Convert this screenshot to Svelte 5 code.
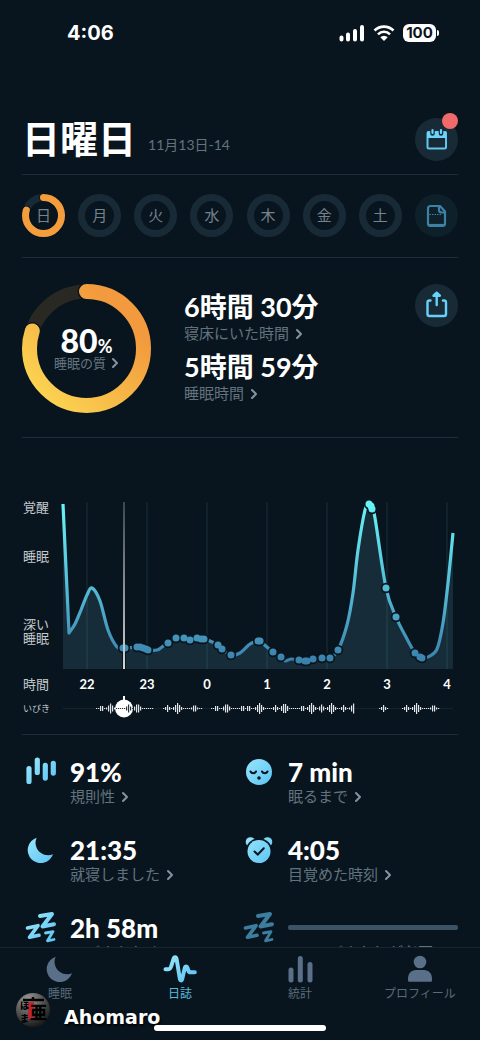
<script>
  const days = ['日', '月', '火', '水', '木', '金', '土'];
  const quality = 80;

  const stats = [
    { icon: 'bars', value: '91%', label: '規則性' },
    { icon: 'face', value: '7 min', label: '眠るまで' },
    { icon: 'moon', value: '21:35', label: '就寝しました' },
    { icon: 'clock', value: '4:05', label: '目覚めた時刻' },
    { icon: 'zzz', value: '2h 58m', label: 'いびきをかく' },
    { icon: 'zzz', value: null, label: 'いびきなしが必要' },
  ];

  const tabs = [
    { icon: 'moon', label: '睡眠' },
    { icon: 'pulse', label: '日誌', active: true },
    { icon: 'chart', label: '統計' },
    { icon: 'person', label: 'プロフィール' },
  ];

  const hours = ['22', '23', '0', '1', '2', '3', '4'].map((label, i) => ({ label, x: 65 + i * 60 }));

  // third value marks a detected snore
  const samples = [
    [47, 135], [53, 126], [59, 112], [65, 97], [70, 90], [78, 103], [86, 132], [95, 149],
    [101, 150, 1], [103, 150, 1], [115, 149, 1], [118, 149, 1], [121, 150, 1], [124, 151, 1],
    [126, 152, 1], [135, 152], [140, 149], [146, 145, 1], [154, 140, 1], [162, 140, 1],
    [168, 142, 1], [175, 140, 1], [179, 141, 1], [182, 141, 1], [188, 143], [196, 147, 1],
    [200, 151, 1], [209, 157, 1], [218, 155], [228, 146], [236, 143, 1], [238, 143, 1],
    [245, 149], [251, 154, 1], [259, 159, 1], [263, 163], [269, 161], [277, 162, 1],
    [283, 163, 1], [285, 163, 1], [291, 161, 1], [300, 160, 1], [308, 160, 1], [316, 152, 1],
    [325, 127], [331, 95], [336, 52], [343, 12], [347, 6, 1], [349, 8, 1], [350, 11, 1],
    [353, 20], [364, 90, 1], [374, 119, 1], [385, 141], [393, 155, 1], [398, 159, 1],
    [400, 160, 1], [406, 159], [415, 151], [421, 125], [426, 85], [431, 35],
  ];
  const snores = samples.filter((s) => s[2]);

  function smooth(pts) {
    let d = '';
    for (let i = 0; i < pts.length - 1; i++) {
      const a = pts[Math.max(i - 1, 0)];
      const b = pts[i];
      const c = pts[i + 1];
      const e = pts[Math.min(i + 2, pts.length - 1)];
      d += ` C${b[0] + (c[0] - a[0]) / 6} ${b[1] + (c[1] - a[1]) / 6}`
        + ` ${c[0] - (e[0] - b[0]) / 6} ${c[1] - (e[1] - b[1]) / 6} ${c[0]} ${c[1]}`;
    }
    return d;
  }

  const curve = 'M41 6 L47 135' + smooth(samples);
  const area = curve + ' V171 H41 Z';

  const ranges = [[74, 132], [141, 180], [189, 332], [357, 367], [380, 417]];
  const peaks = [
    [79, 6], [88, 9], [106, 7], [115, 9], [145, 6], [155, 10], [172, 7], [194, 6], [204, 9],
    [220, 6], [226, 6], [237, 10], [253, 6], [262, 10], [280, 6], [289, 10], [299, 7],
    [309, 10], [321, 6], [331, 9], [361, 6], [384, 6], [394, 10], [411, 7],
  ];
  const bars = ranges.flatMap(([from, to]) => {
    const out = [];
    for (let x = from; x < to; x += 2) {
      out.push({ x, h: Math.max(1, ...peaks.map(([p, h]) => h + 1 - 2 * Math.abs(x - p))) });
    }
    return out;
  });
</script>

{#snippet chevron()}
  <svg class="chevron" viewBox="0 0 8 12" aria-hidden="true"><path d="M2 2l4 4-4 4" /></svg>
{/snippet}

{#snippet icon(name)}
  <svg class="icon" viewBox="0 0 38 36" aria-hidden="true">
    {#if name === 'bars'}
      <path class="line" stroke-width="5.2" d="M7 14.6v12.8M15.3 6v12.4M23.3 11.3v12.8M31.3 9.3v9.8" />
    {:else if name === 'moon'}
      <path class="fill" d="M14.7 5.7A13 13 0 1 0 31 22.3C24 25 17 21.5 14.5 15.5C13 12 13.3 8.5 14.7 5.7Z" />
    {:else if name === 'face'}
      <circle class="fill" cx="19" cy="18" r="13" />
      <path class="cut" d="M10.5 17.5c1 2.3 4.5 2.3 5.5 0M22 17.5c1 2.3 4.5 2.3 5.5 0" />
      <circle cx="19" cy="24" r="1.8" fill="#09151e" />
    {:else if name === 'clock'}
      <circle class="fill" cx="10.5" cy="10" r="4.8" />
      <circle class="fill" cx="27.5" cy="10" r="4.8" />
      <circle cx="19" cy="19.5" r="13.3" fill="#09151e" />
      <circle class="fill" cx="19" cy="19.5" r="11.5" />
      <path class="cut" d="M14.5 19.5l3.3 3 6-6.2" />
    {:else if name === 'zzz'}
      <path class="line" stroke-width="4" d="M18 6l12-2-9.5 12.5 11.5-2.3" />
      <path class="line" stroke-width="3.6" d="M5.5 18l10.5-2.3-8.5 11.6 9.5-2" />
      <path class="line" stroke-width="2.8" d="M23.5 23l7.5-1.4-5.5 9.2 6.5-1.3" />
    {:else if name === 'pulse'}
      <path class="line" stroke-width="4" d="M4.5 18.3H7C9 18.3 9.5 17.5 10.3 15L12.5 8C13.3 5.5 15 5.5 15.6 8L18.8 27.5C19.2 30 20.8 30 21.3 27.5L23.8 17C24.3 15 26 15 26.6 17L27.3 19.5C27.8 21 28.5 21.3 30 21.3H33.8" />
    {:else if name === 'chart'}
      <path class="line" stroke-width="5" d="M10 19v10M19.3 7.5V29M29 13.5V29" />
    {:else}
      <circle class="fill" cx="19" cy="11" r="6.3" />
      <path class="fill" d="M7 27.5c0-5 3.5-8.5 8-8.5h8c4.5 0 8 3.5 8 8.5v2q0 1.3-1.3 1.3H8.3Q7 30.8 7 29.5Z" />
    {/if}
  </svg>
{/snippet}

<svg class="defs" aria-hidden="true">
  <linearGradient id="ice" x1="0" y1="0" x2="38" y2="36" gradientUnits="userSpaceOnUse">
    <stop offset="0" stop-color="#a5ecff" />
    <stop offset="1" stop-color="#4fbdf0" />
  </linearGradient>
</svg>

<main>
  <div class="status">
    <time>4:06</time>
    <div class="signals">
      <svg width="26" height="18" viewBox="0 0 26 18" aria-label="電波">
        <path d="M2.5 13.5v2M9 10.5v5M16 7v8.5M23 3v12.5" stroke="#fff" stroke-width="4" stroke-linecap="round" />
      </svg>
      <svg width="22" height="18" viewBox="0 0 22 18" aria-label="Wi-Fi">
        <path d="M1.5 6.5a13.5 13.5 0 0 1 19 0M5 10.3a8.5 8.5 0 0 1 12 0" fill="none" stroke="#fff" stroke-width="2.6" />
        <path d="M11 17l-3.7-3.8a5.3 5.3 0 0 1 7.4 0Z" fill="#fff" />
      </svg>
      <span class="battery">100</span>
    </div>
  </div>

  <header>
    <h1>日曜日</h1>
    <span class="date">11月13日-14</span>
    <button class="round" aria-label="カレンダー">
      <svg viewBox="0 0 43 43">
        <rect x="12.5" y="14" width="18.5" height="16.5" rx="1.5" fill="none" stroke="#5fc8ee" stroke-width="2" />
        <path d="M12 13.5h19.5v6.5H12Z" fill="#6cd3fa" />
        <path d="M17.5 11.5v4M26 11.5v4" stroke="#192a37" stroke-width="4.6" stroke-linecap="round" />
        <path d="M17.5 12v3M26 12v3" stroke="#6cd3fa" stroke-width="2.2" stroke-linecap="round" />
      </svg>
      <span class="badge"></span>
    </button>
  </header>

  <nav class="week" aria-label="曜日">
    {#each days as day, i (day)}
      <button class="day">
        <svg viewBox="0 0 43 43" aria-hidden="true">
          <circle class="track" cx="21.5" cy="21.5" r="18" />
          {#if i === 0}
            <circle class="gap" cx="21.5" cy="21.5" r="18" pathLength="100" stroke-dasharray="{quality} 100" />
            <circle class="done" cx="21.5" cy="21.5" r="18" pathLength="100" stroke-dasharray="{quality} 100" />
          {/if}
        </svg>
        <span>{day}</span>
      </button>
    {/each}
    <button class="round dim" aria-label="メモ">
      <svg viewBox="0 0 43 43" fill="none" stroke="#3d81a4" stroke-width="2.2" stroke-linejoin="round">
        <path d="M15.5 12h9.5l5 5.5v12q0 2.5-2.5 2.5h-12q-2.5 0-2.5-2.5v-15q0-2.5 2.5-2.5Z" />
        <path d="M24 12.5V16q0 2.5 2.5 2.5H29.5" />
        <path d="M14.5 20.5H26" stroke-width="1" stroke-dasharray="1.5 1" />
        <path d="M14 31H29" />
      </svg>
    </button>
  </nav>

  <section class="summary">
    <a class="quality" href="#quality">
      <svg class="ring" viewBox="0 0 129 129" aria-hidden="true">
        <linearGradient id="gold" x1="0.1" y1="0.1" x2="0.8" y2="0.8">
          <stop offset="0" stop-color="#fbd351" />
          <stop offset="1" stop-color="#f29a3d" />
        </linearGradient>
        <circle class="track" cx="64.5" cy="64.5" r="57" />
        <circle class="gap" cx="64.5" cy="64.5" r="57" pathLength="100" stroke-dasharray="{quality} 100" />
        <circle class="done" cx="64.5" cy="64.5" r="57" pathLength="100" stroke-dasharray="{quality} 100" />
      </svg>
      <span class="percent">{quality}<small>%</small></span>
      <span class="caption">睡眠の質{@render chevron()}</span>
    </a>
    <div class="times">
      <a href="#bed">
        <strong>6時間 30分</strong>
        <span class="label">寝床にいた時間{@render chevron()}</span>
      </a>
      <a href="#asleep">
        <strong>5時間 59分</strong>
        <span class="label">睡眠時間{@render chevron()}</span>
      </a>
    </div>
    <button class="round" aria-label="共有">
      <svg viewBox="0 0 43 43" fill="none" stroke="#66d2fb" stroke-width="2.4" stroke-linecap="round" stroke-linejoin="round">
        <path d="M15.5 16.5h-1q-2 0-2 2v11.5q0 2 2 2h14.5q2 0 2-2v-11.5q0-2-2-2h-1" />
        <path d="M21.7 21V10.5" />
        <path d="M18.5 11.7l3.2-3 3.2 3Z" fill="#66d2fb" />
      </svg>
    </button>
  </section>

  <section class="graph">
    <svg viewBox="0 0 436 224" role="img" aria-label="睡眠グラフ">
      <linearGradient id="depth" x1="0" y1="4" x2="0" y2="166" gradientUnits="userSpaceOnUse">
        <stop offset="0" stop-color="#68f4f7" />
        <stop offset="0.55" stop-color="#54b8d5" />
        <stop offset="1" stop-color="#397faa" />
      </linearGradient>
      <linearGradient id="cursor" x1="0" y1="4" x2="0" y2="171" gradientUnits="userSpaceOnUse">
        <stop offset="0" stop-color="#3d464e" />
        <stop offset="1" stop-color="#d4d6d8" />
      </linearGradient>

      <path d={area} fill="#162d39" />
      {#each hours as hour (hour.label)}
        <path class="hour-line" d="M{hour.x} 4V171" />
        <text class="hour" x={hour.x} y="191">{hour.label}</text>
      {/each}
      <path d={curve} fill="none" stroke="url(#depth)" stroke-width="3.2" stroke-linejoin="round" />
      {#each snores as [x, y]}
        <circle cx={x} cy={y} r="5.2" fill="#09151e" />
      {/each}
      <path d="M102 4V171" stroke="#09151e" stroke-width="4" />
      {#each snores as [x, y]}
        <circle cx={x} cy={y} r="3.5" fill="url(#depth)" />
      {/each}

      <g class="level">
        <text x="1" y="14">覚醒</text>
        <text x="1" y="63">睡眠</text>
        <text x="1" y="131">深い</text>
        <text x="1" y="145">睡眠</text>
        <text x="1" y="191">時間</text>
        <text class="tiny" x="1" y="214">いびき</text>
      </g>

      <path d="M41 210.5H431" stroke="#15232d" />
      <path d="M101 4h2V171h-2Z" fill="url(#cursor)" />
      <path d="M102 198v6" stroke="#fff" stroke-width="2" />
      <circle cx="102" cy="210.5" r="9" fill="#fff" />
      {#each bars as bar}
        <rect
          x={bar.x}
          y={210.5 - bar.h / 2}
          width="1.2"
          height={bar.h}
          fill={Math.abs(bar.x - 102) < 9 ? '#27323b' : '#e4e7e9'}
        />
      {/each}
    </svg>
  </section>

  <section class="stats">
    {#each stats as stat}
      <a class="stat" class:locked={!stat.value} href="#stats">
        {@render icon(stat.icon)}
        <div>
          {#if stat.value}
            <strong>{stat.value}</strong>
            <span class="label">{stat.label}{@render chevron()}</span>
          {:else}
            <span class="bar"></span>
            <span class="label">{stat.label}</span>
          {/if}
        </div>
      </a>
    {/each}
  </section>
</main>

<footer>
  <nav class="tabs">
    {#each tabs as tab (tab.label)}
      <button class:active={tab.active} aria-current={tab.active ? 'page' : undefined}>
        {@render icon(tab.icon)}
        <span>{tab.label}</span>
      </button>
    {/each}
  </nav>
  <div class="author">
    <svg viewBox="0 0 36 36" aria-hidden="true">
      <radialGradient id="coin" cx="0.35" cy="0.2" r="0.8">
        <stop offset="0" stop-color="#9a9a9a" />
        <stop offset="0.55" stop-color="#555555" />
        <stop offset="1" stop-color="#1c1c1c" />
      </radialGradient>
      <circle cx="18" cy="18" r="17" fill="url(#coin)" />
      <path d="M13 10h6v17h-6Z" fill="#c0262d" />
      <path d="M8 8h21M18 5v4" stroke="#000" stroke-width="2.5" />
      <text x="5" y="17" font-size="9">ほ</text>
      <text x="5" y="30" font-size="9">ま</text>
      <text x="15" y="27" font-size="17">亜</text>
    </svg>
    <span>Ahomaro</span>
  </div>
  <div class="home"></div>
</footer>

<style>
  :global(body) {
    background: #09151e;
  }
  main,
  footer {
    font-family: Lato, "Noto Sans CJK JP", sans-serif;
    color: #ffffff;
  }
  main {
    padding: 0 22px 96px;
  }
  button {
    margin: 0;
    padding: 0;
    border: 0;
    background: none;
    color: inherit;
    font: inherit;
    cursor: pointer;
  }
  a {
    color: inherit;
    text-decoration: none;
  }
  svg {
    display: block;
  }
  .defs {
    position: absolute;
    width: 0;
    height: 0;
  }

  .status {
    display: flex;
    justify-content: space-between;
    align-items: center;
    height: 66px;
    padding: 0 22px 0 45px;
    font-family: Inter, sans-serif;
    font-weight: 700;
  }
  .status time {
    font-size: 20px;
  }
  .signals {
    display: flex;
    align-items: center;
    gap: 8px;
  }
  .battery {
    position: relative;
    width: 33px;
    border-radius: 6px;
    background: #ffffff;
    color: #09151e;
    font-size: 15px;
    line-height: 18px;
    text-align: center;
  }
  .battery::after {
    content: '';
    position: absolute;
    top: 6px;
    right: -3px;
    width: 2px;
    height: 6px;
    border-radius: 0 2px 2px 0;
    background: #ffffff;
  }

  header {
    display: flex;
    align-items: center;
    margin-top: 52px;
    padding-bottom: 13px;
    border-bottom: 1px solid #1d2f3c;
  }
  h1 {
    margin: 0 0 3px;
    font-size: 38px;
    line-height: 40px;
    font-weight: 700;
  }
  .date {
    margin: 10px auto 0 12px;
    color: #62737f;
    font-size: 14px;
    line-height: 20px;
  }
  .round {
    position: relative;
    flex: none;
    width: 43px;
    height: 43px;
    border-radius: 50%;
    background: #192a37;
  }
  .round.dim {
    background: #0e202a;
  }
  .badge {
    position: absolute;
    top: -5px;
    right: 0;
    width: 16px;
    height: 16px;
    border-radius: 50%;
    background: #f0696b;
  }

  .week {
    display: flex;
    justify-content: space-between;
    padding: 19px 0 20px;
    border-bottom: 1px solid #1d2f3c;
  }
  .day {
    display: grid;
    place-items: center;
    width: 43px;
    height: 43px;
    color: #74838e;
    font-size: 15px;
    line-height: 20px;
  }
  .day > * {
    grid-area: 1 / 1;
  }
  .day svg {
    width: 43px;
  }
  .day span {
    padding-bottom: 2px;
  }
  .day circle,
  .quality circle {
    fill: none;
    stroke-width: 7px;
    stroke: #192a37;
  }
  .day .gap,
  .day .done,
  .quality .gap,
  .quality .done {
    stroke-linecap: round;
    transform: rotate(-90deg);
    transform-origin: center;
  }
  .day .gap {
    stroke: #09151e;
    stroke-width: 9px;
  }
  .day .done {
    stroke: #f49d3d;
  }

  .summary {
    display: flex;
    align-items: flex-start;
    padding: 26px 0 24px;
    border-bottom: 1px solid #1d2f3c;
  }
  .summary .round {
    margin-left: auto;
  }
  .quality {
    display: grid;
    grid-template: 43px 28px 16px 42px / 129px;
    justify-items: center;
  }
  .ring {
    grid-area: 1 / 1 / 5 / 2;
    width: 129px;
  }
  .quality .track {
    stroke: #2a2823;
    stroke-width: 14px;
  }
  .quality .gap {
    stroke: #09151e;
    stroke-width: 18px;
  }
  .quality .done {
    stroke: url(#gold);
    stroke-width: 15px;
  }
  .percent {
    grid-area: 2 / 1;
    font-size: 32px;
    line-height: 28px;
    font-weight: 900;
  }
  .percent small {
    font-size: 18px;
    font-weight: 700;
  }
  .caption {
    grid-area: 3 / 1;
    display: flex;
    align-items: center;
    gap: 5px;
    color: #667783;
    font-size: 13px;
    line-height: 16px;
  }
  .chevron {
    width: 8px;
    height: 12px;
    fill: none;
    stroke: #8494a0;
    stroke-width: 2px;
    stroke-linecap: round;
    stroke-linejoin: round;
  }
  .times {
    display: flex;
    flex-direction: column;
    gap: 8px;
    margin: 7px 0 0 33px;
  }
  .times strong {
    display: block;
    font-size: 27px;
    line-height: 32px;
    white-space: nowrap;
  }
  .label {
    display: flex;
    align-items: center;
    gap: 6px;
    color: #62737f;
    font-size: 15px;
    line-height: 20px;
    white-space: nowrap;
  }

  .graph {
    padding: 60px 0 12px;
    border-bottom: 1px solid #1d2f3c;
  }
  .graph svg {
    width: 100%;
  }
  .hour-line {
    stroke: #4b8791;
    stroke-opacity: 0.25;
  }
  .hour {
    fill: #ffffff;
    font-size: 13px;
    font-weight: 700;
    text-anchor: middle;
  }
  .level {
    fill: #c3c9cd;
    font-size: 13px;
  }
  .tiny {
    font-size: 9px;
  }

  .stats {
    display: grid;
    grid-template-columns: 1fr 1fr;
    row-gap: 30px;
    padding-top: 23px;
  }
  .stat {
    display: flex;
    gap: 10px;
  }
  .icon {
    flex: none;
    width: 38px;
    height: 36px;
  }
  .stat .icon {
    margin-top: -4px;
    margin-bottom: -4px;
  }
  .icon .line {
    fill: none;
    stroke: url(#ice);
    stroke-linecap: round;
    stroke-linejoin: round;
  }
  .icon .fill {
    fill: url(#ice);
  }
  .icon .cut {
    fill: none;
    stroke: #09151e;
    stroke-width: 2px;
    stroke-linecap: round;
  }
  .stat > div {
    flex: 1;
  }
  .stat strong {
    display: block;
    font-size: 26px;
    line-height: 28px;
    font-weight: 900;
  }
  .stat .chevron,
  .times .chevron {
    margin-top: 2px;
  }
  .locked .icon .line {
    stroke: #3d7e9f;
  }
  .bar {
    display: block;
    height: 5px;
    margin: 11px 0 12px;
    border-radius: 2px;
    background: #3b5363;
  }
  .locked .label {
    justify-content: center;
  }

  footer {
    position: fixed;
    right: 0;
    bottom: 0;
    left: 0;
    height: 92px;
    border-top: 1px solid #16252f;
    background: #09151e;
  }
  .tabs {
    display: grid;
    grid-template-columns: repeat(4, 1fr);
    padding-top: 3px;
  }
  .tabs button {
    display: flex;
    flex-direction: column;
    align-items: center;
    color: #596b7a;
    font-size: 12px;
    line-height: 14px;
  }
  .tabs .active {
    color: #5bb9de;
  }
  .tabs button:not(.active) .line {
    stroke: #5a6f88;
  }
  .tabs button:not(.active) .fill {
    fill: #5a6f88;
  }
  .author {
    position: absolute;
    bottom: 12px;
    left: 15px;
    display: flex;
    align-items: center;
    gap: 13px;
    font-family: "DejaVu Sans", sans-serif;
    font-size: 19px;
    line-height: 20px;
    font-weight: 700;
    text-shadow: 1px 2px 3px #000000;
  }
  .author svg {
    width: 36px;
    font-family: "Noto Sans CJK JP", sans-serif;
    font-weight: 900;
    text-shadow: none;
  }
  .author span {
    padding-top: 14px;
  }
  .home {
    position: absolute;
    bottom: 9px;
    left: 50%;
    width: 172px;
    height: 6px;
    border-radius: 3px;
    background: #ffffff;
    transform: translateX(-50%);
  }
</style>
